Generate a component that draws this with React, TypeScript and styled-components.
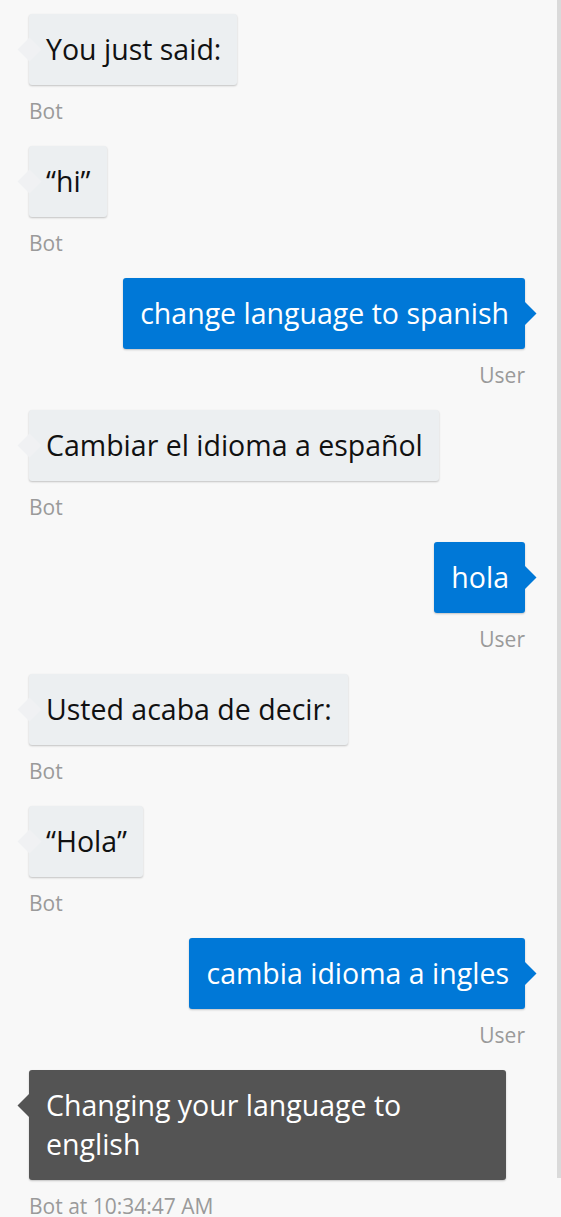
import React from "react";
import styled, { createGlobalStyle, css } from "styled-components";

const Global = createGlobalStyle`
  html, body { margin: 0; padding: 0; background: #f8f8f8; }
  body { font-family: "Open Sans", "Noto Sans", sans-serif; }
`;

const Frame = styled.div`
  display: flex;
  width: 561px;
  height: 1217px;
  overflow: hidden;
  background: #f8f8f8;
`;

const History = styled.div`
  flex: 1;
  display: flex;
  flex-direction: column;
  padding: 14px 32px 0 29px;
`;

const ScrollTrack = styled.div`
  width: 4px;
  height: 1178px;
  background: #dadada;
`;

const Group = styled.div<{ $user?: boolean }>`
  display: flex;
  flex-direction: column;
  align-items: ${(p) => (p.$user ? "flex-end" : "flex-start")};
  margin-bottom: 23px;
`;

const Bubble = styled.div<{ $kind: "bot" | "user" | "dark" }>`
  position: relative;
  max-width: 477px;
  box-sizing: border-box;
  padding: 16px 16px 16px 17px;
  border-radius: 3px;
  font-size: 28.5px;
  line-height: 39px;
  box-shadow: 0 1px 2px rgba(0, 0, 0, 0.22);
  &::before {
    content: "";
    position: absolute;
    top: 27px;
    width: 17px;
    height: 17px;
    transform: rotate(45deg);
    background: inherit;
  }
  ${(p) =>
    p.$kind === "user"
      ? css`
          background: #0078d7;
          color: #fff;
          &::before {
            right: -8px;
          }
        `
      : p.$kind === "dark"
      ? css`
          background: #545454;
          color: #fff;
          &::before {
            left: -8px;
          }
        `
      : css`
          background: #eceff1;
          color: #111;
          &::before {
            left: -8px;
            background: #f0f1f3;
          }
        `}
`;

const BubbleText = styled.span`
  position: relative;
`;

const Label = styled.div`
  margin-top: 14px;
  font-size: 21px;
  line-height: 24px;
  color: #9a9a9a;
`;

type Msg = { from: "bot" | "user" | "dark"; text: string; label: string };

const messages: Msg[] = [
  { from: "bot", text: "You just said:", label: "Bot" },
  { from: "bot", text: "\u201chi\u201d", label: "Bot" },
  { from: "user", text: "change language to spanish", label: "User" },
  { from: "bot", text: "Cambiar el idioma a español", label: "Bot" },
  { from: "user", text: "hola", label: "User" },
  { from: "bot", text: "Usted acaba de decir:", label: "Bot" },
  { from: "bot", text: "\u201cHola\u201d", label: "Bot" },
  { from: "user", text: "cambia idioma a ingles", label: "User" },
  { from: "dark", text: "Changing your language to english", label: "Bot at 10:34:47 AM" },
];

export default function App() {
  return (
    <>
      <Global />
      <Frame>
        <History>
          {messages.map((m, i) => (
            <Group key={i} $user={m.from === "user"}>
              <Bubble $kind={m.from}>
                <BubbleText>{m.text}</BubbleText>
              </Bubble>
              <Label>{m.label}</Label>
            </Group>
          ))}
        </History>
        <ScrollTrack />
      </Frame>
    </>
  );
}
